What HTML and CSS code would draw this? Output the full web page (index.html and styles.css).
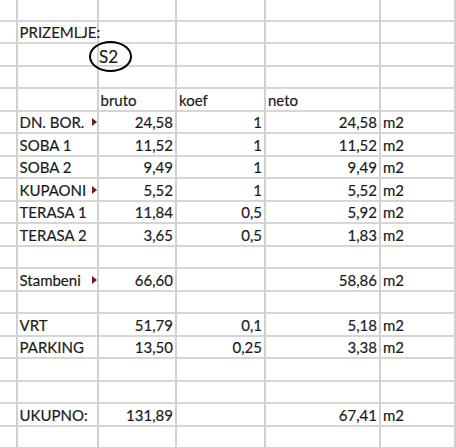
FILE: index.html
```html
<!DOCTYPE html>
<html>
<head>
<meta charset="utf-8">
<link rel="stylesheet" href="styles.css">
</head>
<body>
<div class="sheet">
  <div class="row first"><div class="c"></div><div class="c"></div><div class="c"></div><div class="c"></div><div class="c"></div><div class="c"></div></div>
  <div class="row"><div class="c"></div><div class="c over">PRIZEMLJE:</div><div class="c"></div><div class="c"></div><div class="c"></div><div class="c"></div></div>
  <div class="row"><div class="c"></div><div class="c"></div><div class="c"></div><div class="c"></div><div class="c"></div><div class="c"></div></div>
  <div class="row"><div class="c"></div><div class="c"></div><div class="c"></div><div class="c"></div><div class="c"></div><div class="c"></div></div>
  <div class="row"><div class="c"></div><div class="c"></div><div class="c">bruto</div><div class="c">koef</div><div class="c">neto</div><div class="c"></div></div>
  <div class="row"><div class="c"></div><div class="c clip"><span>DN. BOR.</span><i class="tri"></i></div><div class="c num">24,58</div><div class="c num">1</div><div class="c num">24,58</div><div class="c">m2</div></div>
  <div class="row"><div class="c"></div><div class="c">SOBA 1</div><div class="c num">11,52</div><div class="c num">1</div><div class="c num">11,52</div><div class="c">m2</div></div>
  <div class="row"><div class="c"></div><div class="c">SOBA 2</div><div class="c num">9,49</div><div class="c num">1</div><div class="c num">9,49</div><div class="c">m2</div></div>
  <div class="row"><div class="c"></div><div class="c clip"><span>KUPAONI</span><i class="tri"></i></div><div class="c num">5,52</div><div class="c num">1</div><div class="c num">5,52</div><div class="c">m2</div></div>
  <div class="row"><div class="c"></div><div class="c">TERASA 1</div><div class="c num">11,84</div><div class="c num">0,5</div><div class="c num">5,92</div><div class="c">m2</div></div>
  <div class="row"><div class="c"></div><div class="c">TERASA 2</div><div class="c num">3,65</div><div class="c num">0,5</div><div class="c num">1,83</div><div class="c">m2</div></div>
  <div class="row"><div class="c"></div><div class="c"></div><div class="c"></div><div class="c"></div><div class="c"></div><div class="c"></div></div>
  <div class="row"><div class="c"></div><div class="c clip"><span>Stambeni</span><i class="tri"></i></div><div class="c num">66,60</div><div class="c"></div><div class="c num">58,86</div><div class="c">m2</div></div>
  <div class="row"><div class="c"></div><div class="c"></div><div class="c"></div><div class="c"></div><div class="c"></div><div class="c"></div></div>
  <div class="row"><div class="c"></div><div class="c">VRT</div><div class="c num">51,79</div><div class="c num">0,1</div><div class="c num">5,18</div><div class="c">m2</div></div>
  <div class="row"><div class="c"></div><div class="c">PARKING</div><div class="c num">13,50</div><div class="c num">0,25</div><div class="c num">3,38</div><div class="c">m2</div></div>
  <div class="row"><div class="c"></div><div class="c"></div><div class="c"></div><div class="c"></div><div class="c"></div><div class="c"></div></div>
  <div class="row"><div class="c"></div><div class="c"></div><div class="c"></div><div class="c"></div><div class="c"></div><div class="c"></div></div>
  <div class="row"><div class="c"></div><div class="c">UKUPNO:</div><div class="c num">131,89</div><div class="c"></div><div class="c num">67,41</div><div class="c">m2</div></div>
  <div class="row"><div class="c"></div><div class="c"></div><div class="c"></div><div class="c"></div><div class="c"></div><div class="c"></div></div>
  <div class="shape">S2</div>
</div>
</body>
</html>
```

FILE: styles.css
```css
html, body {
  margin: 0;
  padding: 0;
  background: #ffffff;
}
body {
  width: 456px;
  height: 448px;
  overflow: hidden;
  font-family: Lato, "Liberation Sans", sans-serif;
  font-size: 15px;
  color: #1a1a1a;
  -webkit-text-stroke: 0.18px #1a1a1a;
}
.sheet {
  position: relative;
  width: 456px;
}
.row {
  display: grid;
  grid-template-columns: 17.5px 81px 78.5px 89px 115px 75px;
  height: 22.5px;
}
.row.first {
  height: 21.5px;
}
.c {
  box-sizing: border-box;
  border-right: 2px solid #d0d0d0;
  border-bottom: 2px solid #d6d6d6;
  padding: 0 2px 2px 2px;
  display: flex;
  align-items: flex-end;
  line-height: 16px;
  white-space: nowrap;
  min-width: 0;
}
.over {
  overflow: visible;
}
.num {
  justify-content: flex-end;
}
.clip {
  overflow: hidden;
  padding-right: 0;
}
.clip span {
  overflow: hidden;
}
.tri {
  margin-left: auto;
  align-self: flex-end;
  margin-bottom: 4px;
  width: 0;
  height: 0;
  border-top: 4px solid transparent;
  border-bottom: 4px solid transparent;
  border-left: 5px solid #6e1a20;
  flex: none;
}
.shape {
  position: absolute;
  left: 89px;
  top: 41px;
  width: 43px;
  height: 31px;
  box-sizing: border-box;
  border: 2px solid #000;
  border-radius: 50%;
  display: flex;
  align-items: center;
  justify-content: center;
  padding-right: 4px;
  font-size: 17px;
  background: transparent;
}
```
